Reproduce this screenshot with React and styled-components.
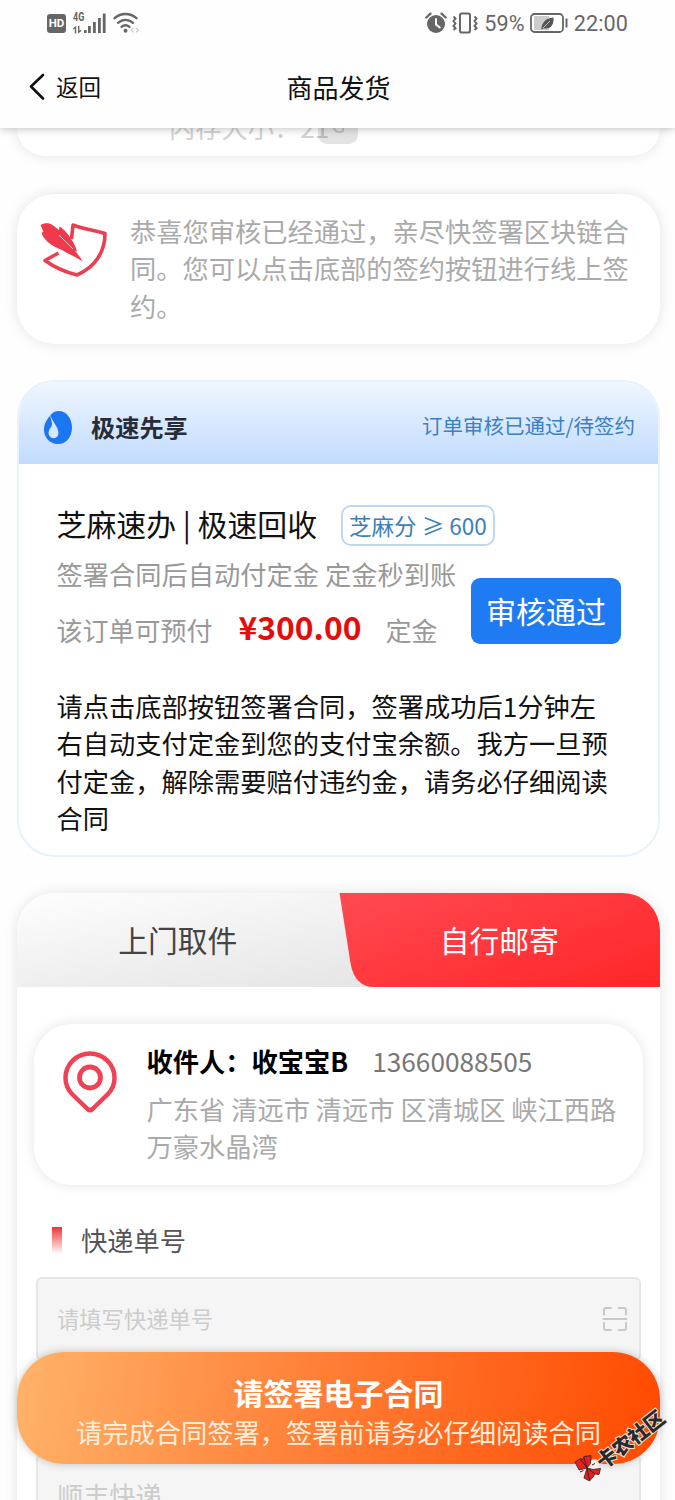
import React from "react";
import styled, { createGlobalStyle } from "styled-components";

const App = () => {
  return (
    <Screen>
      <GlobalStyle />
      <Header>
        <StatusBar />
        <NavBar>
          <BackButton>
            <svg width="16" height="28" viewBox="0 0 16 28">
              <path
                d="M14 2 2 13.5 14 25.5"
                fill="none"
                stroke="#111"
                strokeWidth="2.6"
                strokeLinecap="round"
                strokeLinejoin="round"
              />
            </svg>
            返回
          </BackButton>
          <h1>商品发货</h1>
        </NavBar>
      </Header>
      <Content>
        <SpecCard>
          <SpecRow>
            内存大小：21<SpecTag>G</SpecTag>
          </SpecRow>
        </SpecCard>
        <NoticeCard>
          <IconCell>
            <ContractIcon />
          </IconCell>
          <p>
            恭喜您审核已经通过，亲尽快签署区块链合同。您可以点击底部的签约按钮进行线上签约。
          </p>
        </NoticeCard>
        <PrepayCard>
          <PrepayHeader>
            <DropIcon />
            <b>极速先享</b>
            <span>订单审核已通过/待签约</span>
          </PrepayHeader>
          <PrepayBody>
            <PrepayTitle>
              芝麻速办 | 极速回收
              <ScoreTag>芝麻分 ≥ 600</ScoreTag>
            </PrepayTitle>
            <PrepayRow>
              <div>
                <Muted>签署合同后自动付定金 定金秒到账</Muted>
                <PriceLine>
                  该订单可预付<Price>¥300.00</Price>定金
                </PriceLine>
              </div>
              <PassButton>审核通过</PassButton>
            </PrepayRow>
            <Tips>
              请点击底部按钮签署合同，签署成功后1分钟左右自动支付定金到您的支付宝余额。我方一旦预付定金，解除需要赔付违约金，请务必仔细阅读合同
            </Tips>
          </PrepayBody>
        </PrepayCard>
        <ShipCard>
          <Tabs>
            <Tab>上门取件</Tab>
            <Tab $active>自行邮寄</Tab>
          </Tabs>
          <AddressCard>
            <IconCell>
              <PinIcon />
            </IconCell>
            <div>
              <Receiver>
                <b>收件人：收宝宝B</b>
                <span>13660088505</span>
              </Receiver>
              <Address>
                广东省 清远市 清远市 区清城区 峡江西路万豪水晶湾
              </Address>
            </div>
          </AddressCard>
          <FieldLabel>快递单号</FieldLabel>
          <Field>
            请填写快递单号
            <ScanIcon />
          </Field>
          <Field $large>顺丰快递</Field>
        </ShipCard>
      </Content>
      <SignButton>
        <b>请签署电子合同</b>
        <span>请完成合同签署，签署前请务必仔细阅读合同</span>
      </SignButton>
      <Watermark>
        <WatermarkLogo />
        <span>卡农社区</span>
      </Watermark>
    </Screen>
  );
};

const StatusBar = () => (
  <StatusWrapper>
    <HdBadge>HD</HdBadge>
    <Network>
      <span>4G</span>
      <svg width="34" height="22" viewBox="0 0 34 22" fill="#666">
        <path d="M3.2 14v7.5H1.8v-5L.2 17.4V16zM5 14h1.4v4.8l1.8-1.2v1.7L5 21.5z" />
        <rect x="11" y="18" width="2.6" height="3" />
        <rect x="15" y="14" width="2.8" height="7" />
        <rect x="20" y="10" width="2.8" height="11" />
        <rect x="25" y="6" width="2.8" height="15" />
        <rect x="29.8" y="1.5" width="2.8" height="19.5" />
      </svg>
    </Network>
    <svg width="27" height="22" viewBox="0 0 27 22" fill="none">
      <g stroke="#666" strokeWidth="2.3" strokeLinecap="round">
        <path d="M1.5 6.2c6.5-5.6 15.5-5.6 22 0" />
        <path d="M5 10.8c4.5-3.8 10.5-3.8 15 0" />
        <path d="M8.5 14.8c2.5-2 5.5-2 8 0" />
      </g>
      <circle cx="12.5" cy="18.8" r="2" fill="#666" />
      <path
        d="m20.500 16-2.200 2.200 2.200 2.200M23 16l2.200 2.200-2.200 2.200"
        stroke="#ccc"
        strokeWidth="1.2"
      />
    </svg>
    <StatusRight>
      <svg width="22" height="22" viewBox="0 0 22 22">
        <circle cx="11" cy="12" r="9" fill="#666" />
        <path
          d="M1.3 5.5 5.5 1.6M20.7 5.5l-4.2-3.9"
          stroke="#666"
          strokeWidth="2.3"
          strokeLinecap="round"
        />
        <path
          d="M11 7v5.5l3.8 3"
          fill="none"
          stroke="#fff"
          strokeWidth="2"
          strokeLinecap="round"
        />
      </svg>
      <svg width="28" height="22" viewBox="0 0 28 22" fill="none" stroke="#666">
        <rect x="9" y="1.5" width="10" height="19" rx="1.8" strokeWidth="2" />
        <path
          d="m2.500 4.500 2 2L2.500 9l2 2.500-2 2.500 2 2.200-2 1.800M23.500 4.500l2 2-2 2.500 2 2.500-2 2.500 2 2.200-2 1.800"
          strokeWidth="2"
        />
      </svg>
      <span>59%</span>
      <svg width="39" height="22" viewBox="0 0 39 22">
        <rect
          x="1"
          y="2"
          width="32"
          height="18"
          rx="3.5"
          fill="#fff"
          stroke="#666"
          strokeWidth="1.8"
        />
        <path d="M4 4h15v14H4z" fill="#ccc" />
        <path
          d="M23.5 5.5c.5 7-2.500 12-9.500 10.800l-2.500 1.500c-.4-6 3.500-11.600 12-12.300z"
          fill="#555"
        />
        <path d="m13 16 7-7" stroke="#ddd" strokeWidth=".8" />
        <path d="M36.5 6.5v9" stroke="#666" strokeWidth="2" />
      </svg>
      <span>22:00</span>
    </StatusRight>
  </StatusWrapper>
);

const ContractIcon = () => (
  <svg width="68" height="58" viewBox="0 0 68 58">
    <path
      d="M31.500 18 33 4C44 8 53 9 65 12.500 65 31 55 46 37 54 25 51 14 46 5 39.500L18.500 32"
      fill="none"
      stroke="#ea3f51"
      strokeWidth="3.6"
      strokeLinejoin="round"
    />
    <path
      d="M.500 4C4 2 9 1.500 12.500 4l6.500 5 .5-3.500C24 8 29 14 31 18c3.500 4 5 9 6 12.500l-2-.5C38 33 41 38 43 40.500 35 36 27 32 21 28.500 11 25 3 18 1.500 11.500L3.500 11z"
      fill="#f0394c"
    />
    <path d="m19 14 14 14" fill="none" stroke="#fff" strokeWidth=".7" />
  </svg>
);

const DropIcon = () => (
  <svg width="28" height="33" viewBox="0 0 28 33">
    <path
      d="M7 3.5C9 1 12 0 14.5 0 22.5 0 28 7.5 28 16.5S22.5 33 14 33 0 26.5 0 18.5C0 12 3.5 8 7 3.5z"
      fill="#1a76f2"
    />
    <path
      d="M6.500 4C7.500 10 14 15 14.500 21.500a5 5.500 0 1 1-10 .5C4.800 17.500 8.200 16.500 8 12.500 7.800 9 6 7.500 6.500 4z"
      fill="#d6e8ff"
    />
  </svg>
);

const PinIcon = () => (
  <svg width="54" height="64" viewBox="0 0 54 64" fill="none" stroke="#ef4355">
    <path
      d="M9.5 43.5C4.500 38.500 2.500 33.500 2.500 27a24.500 24.500 0 0 1 49 0c0 6.500-2 11.500-7 16.500L29.500 58q-2.500 2.300-5 0z"
      strokeWidth="4.5"
      strokeLinejoin="round"
    />
    <circle cx="27" cy="26.5" r="10.5" strokeWidth="4.8" />
  </svg>
);

const ScanIcon = () => (
  <svg width="26" height="26" viewBox="0 0 26 26" fill="none" stroke="#c8c8c8">
    <path
      d="M2 8.5V4q0-2 2-2h5M17 2h5q2 0 2 2v4.5M24 17v5q0 2-2 2h-5M9 24H4q-2 0-2-2v-5M1.5 13h23"
      strokeWidth="2"
      strokeLinecap="round"
    />
  </svg>
);

const WatermarkLogo = () => (
  <svg width="28" height="28" viewBox="0 0 28 28">
    <circle cx="20.5" cy="10" r="4.8" fill="#f8f0f0" />
    <circle cx="8" cy="20" r="4.800" fill="#f8f0f0" />
    <g fill="#e5201f" stroke="#26221f" strokeWidth=".8" strokeLinejoin="round">
      <path d="m1 8 5.500-3.500 2 1 1.500-3 7-1-.5 8-3.500 4.500L5 16z" />
      <path d="m13 14 6 1.500 7.500-1-1.500 6-4-.5-2 3-3.500 4-5.500-3z" />
    </g>
    <path
      d="m6.500 5 6.500 9M10 3.500l3 10.500 8 6M13 14l2.500 12"
      fill="none"
      stroke="#30201f"
      strokeWidth=".9"
    />
    <path
      d="m6 18 3.500-1.500M18 11l3-1.500"
      stroke="#30201f"
      strokeWidth="1"
    />
  </svg>
);

const GlobalStyle = createGlobalStyle`
  * {
    box-sizing: border-box;
  }
  body {
    margin: 0;
    background: #fefefe;
  }
  h1, p {
    margin: 0;
  }
  svg {
    display: block;
    flex-shrink: 0;
  }
`;

const Screen = styled.div`
  position: relative;
  display: flex;
  flex-direction: column;
  width: 675px;
  height: 1500px;
  overflow: hidden;
  background: #fefefe;
  font-family: "Noto Sans CJK SC", sans-serif;
  font-size: 26.25px;
  line-height: 37.5px;
  color: #111;
`;

const Header = styled.header`
  position: relative;
  z-index: 2;
  flex-shrink: 0;
  height: 128px;
  background: #fefefe;
  box-shadow: 0 1px 8px rgba(0, 0, 0, 0.25);
`;

const StatusWrapper = styled.div`
  display: flex;
  align-items: center;
  height: 46px;
  padding: 0 47px 0 47px;
  font-family: Roboto, sans-serif;
  color: #666;
`;

const HdBadge = styled.div`
  width: 19px;
  height: 19px;
  margin-right: 7px;
  border-radius: 3px;
  background: #666;
  color: #fff;
  font-size: 11.5px;
  font-weight: 700;
  line-height: 19px;
  text-align: center;
`;

const Network = styled.div`
  position: relative;
  margin-right: 6px;
  span {
    position: absolute;
    top: -1px;
    left: 0;
    font-size: 12px;
    font-weight: 700;
    line-height: 12px;
    transform: scaleX(0.75);
    transform-origin: left;
  }
`;

const StatusRight = styled.div`
  display: flex;
  align-items: center;
  margin-left: auto;
  font-size: 21.6px;
  letter-spacing: 0.1px;
  svg {
    margin-right: 5px;
  }
  svg:first-child {
    margin-right: 4px;
  }
  span {
    margin: 1px 5px 0 0;
  }
  span:last-child {
    margin-right: 0;
  }
`;

const NavBar = styled.div`
  display: grid;
  grid-template-columns: 1fr auto 1fr;
  align-items: center;
  height: 81px;
  padding: 0 27px 0 29px;
  h1 {
    font-size: 26px;
    font-weight: 400;
  }
`;

const BackButton = styled.div`
  display: flex;
  align-items: center;
  gap: 11px;
  font-size: 22.5px;
`;

const Content = styled.main`
  display: flex;
  flex: 1;
  flex-direction: column;
  gap: 37.5px;
  min-height: 0;
  padding: 0 15px 0 17px;
  overflow: hidden;
`;

const Card = styled.section`
  flex-shrink: 0;
  border-radius: 37.5px;
  background: #fff;
  box-shadow: 0 0 14px rgba(0, 0, 0, 0.11);
`;

const SpecCard = styled(Card)`
  height: 28px;
  border-radius: 0 0 37.5px 37.5px;
  overflow: hidden;
`;

const SpecRow = styled.div`
  display: flex;
  align-items: center;
  height: 37.5px;
  margin-top: -19px;
  padding-left: 152px;
  color: #d2d2d2;
`;

const SpecTag = styled.span`
  width: 40px;
  height: 27px;
  margin: 5px 0 0 -11px;
  border-radius: 9px;
  background: rgba(0, 0, 0, 0.11);
  color: #bbb;
  font-size: 20px;
  line-height: 16px;
  text-align: center;
`;

const NoticeCard = styled(Card)`
  display: flex;
  height: 150px;
  padding: 19px 30px 0 0;
  color: #aaa;
`;

const IconCell = styled.div`
  display: flex;
  justify-content: center;
  flex: 0 0 113px;
  padding-top: 8px;
`;

const PrepayCard = styled(Card)`
  height: 477px;
  margin-top: -1px;
  border: 2px solid #e7f2fa;
  overflow: hidden;
  box-shadow: none;
`;

const PrepayHeader = styled.div`
  display: flex;
  align-items: center;
  height: 82px;
  padding: 8px 23px 0 25px;
  background: linear-gradient(#eff6ff, #c1dbfd);
  b {
    margin-left: 19px;
    color: #262d38;
    font-size: 24.2px;
  }
  span {
    margin: -2px 0 0 auto;
    color: #3b7fc4;
    font-size: 20.5px;
  }
`;

const PrepayBody = styled.div`
  padding: 37px 37px 0 37.5px;
`;

const PrepayTitle = styled.div`
  display: flex;
  align-items: center;
  height: 45px;
  font-size: 29.9px;
`;

const ScoreTag = styled.span`
  height: 41px;
  margin: 3px 0 0 24px;
  padding: 0 6px;
  border: 2px solid #bed8f3;
  border-radius: 10px;
  color: #3b7fb9;
  font-size: 22.5px;
  line-height: 37px;
`;

const PrepayRow = styled.div`
  display: flex;
  align-items: center;
  justify-content: space-between;
  height: 112px;
  margin-top: 9px;
  white-space: nowrap;
`;

const Muted = styled.div`
  color: #999;
`;

const PriceLine = styled(Muted)`
  display: flex;
  align-items: center;
  height: 73px;
  font-size: 26px;
`;

const Price = styled.b`
  margin: -6px 24px 0 26px;
  color: #e60c0c;
  font-size: 31.8px;
`;

const PassButton = styled.div`
  width: 150px;
  height: 66px;
  border-radius: 9px;
  background: #1f7bf2;
  color: #fff;
  font-size: 30px;
  line-height: 65px;
  text-align: center;
`;

const Tips = styled.p`
  width: 560px;
  margin-top: 20.5px;
`;

const ShipCard = styled(Card)`
  height: 700px;
  margin-top: -1.5px;
  border-radius: 37.5px 37.5px 0 0;
`;

const Tabs = styled.div`
  display: flex;
  height: 94px;
  border-radius: 37.5px 37.5px 0 0;
  overflow: hidden;
  background: linear-gradient(170deg, #fefefe, #e0e0e0 90%);
`;

const Tab = styled.div`
  flex: 1;
  color: ${({ $active }) => ($active ? "#fff" : "#444")};
  background: ${({ $active }) =>
    $active ? "linear-gradient(160deg, #ff4a52, #ff2628)" : "none"};
  clip-path: ${({ $active }) =>
    $active ? 'path("M1 0 12 70Q16 94 36 94H330V0Z")' : "none"};
  font-size: 29.8px;
  line-height: 93px;
  text-align: center;
`;

const AddressCard = styled(Card)`
  display: flex;
  height: 161px;
  margin: 37px 17px 0 16.5px;
  padding: 19px 17px 0 0;
`;

const Receiver = styled.div`
  display: flex;
  gap: 24px;
  color: #000;
  span {
    color: #777;
  }
`;

const Address = styled.p`
  margin-top: 10px;
  color: #aaa;
`;

const FieldLabel = styled.div`
  display: flex;
  align-items: center;
  margin: 36.5px 0 18px 35px;
  color: #555;
  &::before {
    content: "";
    width: 10px;
    height: 27px;
    margin-right: 19px;
    background: linear-gradient(#f03535, #fff);
  }
`;

const Field = styled.div`
  display: flex;
  align-items: center;
  justify-content: space-between;
  height: 84px;
  margin: 0 19px 93px 19px;
  padding: 0 11px 0 19px;
  border: 2px solid #e6e6e6;
  border-radius: 6px;
  background: #f5f5f5;
  color: #ccc;
  font-size: ${({ $large }) => ($large ? "26.2px" : "22.3px")};
`;

const SignButton = styled.div`
  position: absolute;
  z-index: 3;
  left: 17px;
  bottom: 36px;
  display: flex;
  flex-direction: column;
  align-items: center;
  width: 643px;
  height: 112px;
  padding-top: 19px;
  border-radius: 47px;
  background: linear-gradient(100deg, #ffb36a, #ff7d35 48%, #ff4a00);
  box-shadow: 0 0 9px rgba(0, 0, 0, 0.22);
  color: #fff;
  b {
    font-size: 30px;
    line-height: 43px;
  }
  span {
    color: #ffeed9;
  }
`;

const Watermark = styled.div`
  position: absolute;
  z-index: 4;
  left: 574px;
  top: 1454px;
  span {
    position: absolute;
    left: 16px;
    top: -28px;
    color: #262a30;
    font-size: 20px;
    font-weight: 900;
    line-height: 26px;
    white-space: nowrap;
    paint-order: stroke fill;
    -webkit-text-stroke: 2px #f8dfc8;
    transform: rotate(-38deg);
  }
`;

export default App;
